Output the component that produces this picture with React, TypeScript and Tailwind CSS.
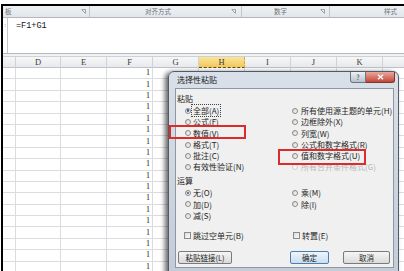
import React from "react";

const COLW = ["w-[13px]", "w-[45px]", "w-[46px]", "w-[46px]", "w-[46px]", "w-[46px]", "w-[46px]", "w-[46px]", "w-[46px]", "w-[46px]"];
const HEAD = ["", "D", "E", "F", "G", "H", "I", "J", "K", ""];

function Radio({ checked, disabled }: { checked?: boolean; disabled?: boolean }) {
  return (
    <span
      className={
        disabled
          ? "inline-flex h-[6px] w-[6px] shrink-0 items-center justify-center rounded-full border border-[#cfcfcf] bg-[#f6f6f6]"
          : "inline-flex h-[6px] w-[6px] shrink-0 items-center justify-center rounded-full border border-[#8a8a8a] bg-gradient-to-br from-[#d4d4d4] to-[#fbfbfb]"
      }
    >
      {checked && <span className="h-[2.5px] w-[2.5px] rounded-full bg-[#2a5a8e]" />}
    </span>
  );
}

function Opt({
  label,
  checked,
  disabled,
  focus,
  gap,
}: {
  label: string;
  checked?: boolean;
  disabled?: boolean;
  focus?: boolean;
  gap?: string;
}) {
  return (
    <div className={"flex h-[11.3px] items-center " + (gap ?? "gap-[2px]")}>
      <Radio checked={checked} disabled={disabled} />
      <span
        className={
          (disabled ? "text-[#b8b8b8] " : "text-[#1e1e1e] ") +
          (focus ? "outline-1 outline-dotted outline-[#444] px-[1px] -ml-[1px]" : "")
        }
      >
        {label}
      </span>
    </div>
  );
}

function Check({ label }: { label: string }) {
  return (
    <div className="flex h-[11px] items-center gap-[2px]">
      <span className="h-[7px] w-[7px] shrink-0 border border-[#8a8a8a] bg-gradient-to-br from-[#dcdcdc] to-[#fafafa]" />
      <span className="text-[#1e1e1e]">{label}</span>
    </div>
  );
}

function Launcher() {
  return (
    <svg width="5" height="5" viewBox="0 0 5 5" className="shrink-0">
      <path d="M0.5 0.5H4.5V4.5" fill="none" stroke="#8a8f96" strokeWidth="0.8" />
      <path d="M1 1L4 4" stroke="#8a8f96" strokeWidth="0.8" />
    </svg>
  );
}

export default function App() {
  const rows = Array.from({ length: 18 });
  return (
    <div className="relative h-[271px] w-[404px] overflow-hidden bg-white pl-[1px] pt-[4px] font-['Noto_Sans_CJK_SC',sans-serif]">
      <div className="h-full border-l-2 border-t-2 border-black">
        {/* ribbon group labels */}
        <div className="flex h-[11px] bg-gradient-to-b from-[#eef1f4] to-[#e2e6eb] text-[6.5px] leading-[11px] text-[#6f747a]">
          <div className="flex w-[87px] items-center border-r border-[#c3c7cc] pr-[3px]">
            <span className="pl-[2px]">板</span>
            <span className="ml-auto">
              <Launcher />
            </span>
          </div>
          <div className="flex w-[152px] items-center border-r border-[#c3c7cc] pr-[5px]">
            <span className="pl-[55px]">对齐方式</span>
            <span className="ml-auto">
              <Launcher />
            </span>
          </div>
          <div className="flex w-[88px] items-center border-r border-[#c3c7cc] pr-[4px]">
            <span className="pl-[32px]">数字</span>
            <span className="ml-auto">
              <Launcher />
            </span>
          </div>
          <div className="flex flex-1 items-center">
            <span className="pl-[54px]">样式</span>
          </div>
        </div>
        {/* formula bar */}
        <div className="flex h-[37px] border-y border-[#b4b8bd] bg-white">
          <div className="flex w-[5px] flex-col items-center border-r border-[#c4c8cc] pt-[4px] text-[6px] leading-[6px] text-[#7a7a7a]">
            :
          </div>
          <div className="pl-[8px] pt-[3px] font-['Liberation_Mono',monospace] text-[8.5px] leading-[10px] text-[#111]">
            =F1+G1
          </div>
        </div>
        <div className="h-[3px] border-b border-[#cdd0d4] bg-[#f1f2f4]" />
        {/* column headers */}
        <div className="flex h-[11px] font-['Liberation_Serif',serif] text-[8.5px] leading-[10px] text-[#3d3d3d]">
          {HEAD.map((h, i) => (
            <div
              key={i}
              className={
                COLW[i] +
                " flex shrink-0 items-center justify-center border-r " +
                (i === 5
                  ? "border-[#d9a93b] border-b border-b-[#5a4a20] border-dashed bg-gradient-to-b from-[#fbe59a] to-[#f2c757]"
                  : "border-[#cfd2d6] border-b border-b-[#bfc3c8] bg-gradient-to-b from-[#f6f7f8] to-[#e7e9ec]")
              }
            >
              {h}
            </div>
          ))}
        </div>
        {/* grid rows */}
        {rows.map((_, r) => (
          <div key={r} className="flex h-[11.4px] font-['Liberation_Serif',serif] text-[8px] leading-[10px] text-[#222]">
            {COLW.map((w, i) => (
              <div
                key={i}
                className={w + " flex shrink-0 items-center justify-end border-b border-r border-[#dadcdf] pr-[2px]"}
              >
                {i === 3 ? "1" : ""}
              </div>
            ))}
          </div>
        ))}
      </div>

      {/* dialog */}
      <div className="absolute left-[168px] top-[71px] h-[204px] w-[231px] rounded-t-[6px] border border-[#515a66] bg-gradient-to-b from-[#d9e0e9] to-[#c3ccd7] text-[8px] leading-[11.3px] shadow-[-3px_1px_5px_rgba(0,0,0,0.6)]">
        <div className="flex h-[16px] items-center">
          <span className="pl-[8px] text-[8px] leading-none text-[#1c1c1c]">选择性粘贴</span>
          <div className="ml-auto mr-[3px] flex self-start">
            <div className="flex h-[11px] w-[16px] items-center justify-center rounded-bl-[3px] border border-t-0 border-[#6d7682] bg-gradient-to-b from-[#eef2f6] to-[#b7c1cc] text-[7px] leading-none text-[#3b4450]">
              ?
            </div>
            <div className="flex h-[11px] w-[29px] items-center justify-center rounded-br-[3px] border border-l-0 border-t-0 border-[#7d3530] bg-gradient-to-b from-[#e8a89c] to-[#c2443a]">
              <svg width="7" height="6" viewBox="0 0 7 6">
                <path d="M1 0.8L6 5.2M6 0.8L1 5.2" stroke="white" strokeWidth="1.4" />
              </svg>
            </div>
          </div>
        </div>
        <div className="ml-[6px] mr-[4px] h-[180px] border border-[#8e98a4] bg-[#f0f0f0] pt-[4px]">
          <div className="grid grid-cols-[114px_1fr]">
            <div>
              <div className="h-[12px] pl-[1px] leading-[11px] text-[#1e1e1e]">粘贴</div>
              <div className="pl-[9px]">
                <Opt label="全部(A)" checked focus />
                <Opt label="公式(F)" />
                <Opt label="数值(V)" />
                <Opt label="格式(T)" />
                <Opt label="批注(C)" />
                <Opt label="有效性验证(N)" />
              </div>
            </div>
            <div className="pl-[2px] pt-[12px]">
              <Opt label="所有使用源主题的单元(H)" gap="gap-[3px]" />
              <Opt label="边框除外(X)" gap="gap-[3px]" />
              <Opt label="列宽(W)" gap="gap-[3px]" />
              <Opt label="公式和数字格式(R)" gap="gap-[3px]" />
              <Opt label="值和数字格式(U)" gap="gap-[3px]" />
              <Opt label="所有合并条件格式(G)" disabled gap="gap-[3px]" />
            </div>
          </div>
          <div className="mt-[2.7px] grid grid-cols-[114px_1fr]">
            <div>
              <div className="h-[12px] pl-[1px] leading-[11px] text-[#1e1e1e]">运算</div>
              <div className="pl-[9px]">
                <Opt label="无(O)" checked />
                <Opt label="加(D)" />
                <Opt label="减(S)" />
              </div>
            </div>
            <div className="pl-[2px] pt-[12px]">
              <Opt label="乘(M)" gap="gap-[3px]" />
              <Opt label="除(I)" gap="gap-[3px]" />
            </div>
          </div>
          <div className="mt-[8.6px] grid grid-cols-[114px_1fr]">
            <div className="pl-[8px]">
              <Check label="跳过空单元(B)" />
            </div>
            <div className="pl-[3px]">
              <Check label="转置(E)" />
            </div>
          </div>
          <div className="mt-[10.5px] flex h-[13px] items-stretch text-[7.5px] leading-none text-[#1e1e1e]">
            <div className="ml-[2px] flex w-[54px] items-center justify-center rounded-[2px] border border-[#7a7a7a] bg-gradient-to-b from-[#f6f6f6] to-[#dadada]">
              粘贴链接(L)
            </div>
            <div className="ml-[58px] flex w-[39px] items-center justify-center rounded-[2px] border border-[#4d7fae] bg-gradient-to-b from-[#eef5fb] to-[#c9dff0]">
              确定
            </div>
            <div className="ml-[14px] flex w-[47px] items-center justify-center rounded-[2px] border border-[#7a7a7a] bg-gradient-to-b from-[#f6f6f6] to-[#dadada]">
              取消
            </div>
          </div>
        </div>
      </div>

      {/* red highlight boxes */}
      <div className="absolute left-[169px] top-[125px] h-[14px] w-[77px] border-2 border-[#dc2b2b]" />
      <div className="absolute left-[278px] top-[149px] h-[16px] w-[88px] border-2 border-[#dc2b2b]" />
    </div>
  );
}
